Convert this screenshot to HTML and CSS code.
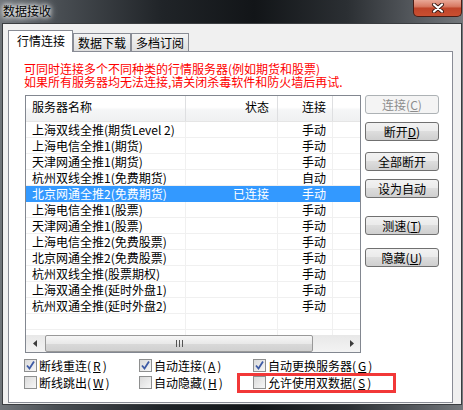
FILE: index.html
```html
<!DOCTYPE html>
<html lang="zh-CN">
<head>
    <meta charset="UTF-8">
    <title>数据接收</title>
    <link rel="stylesheet" href="styles.css">
</head>
<body>
    <div class="window">
        <div class="titlebar">
            <span class="title">数据接收</span>
            <div class="close">
                <svg width="14" height="10" viewBox="0 0 14 10">
                    <path d="M3 1.5 L11 8.5 M11 1.5 L3 8.5" stroke="#3a1a14" stroke-width="4" stroke-linecap="round"/>
                    <path d="M3 1.5 L11 8.5 M11 1.5 L3 8.5" stroke="#fff" stroke-width="2.2" stroke-linecap="round"/>
                </svg>
            </div>
        </div>
        <div class="client">
            <div class="tabs">
                <div class="tab active">行情连接</div>
                <div class="tab">数据下载</div>
                <div class="tab">多档订阅</div>
            </div>
            <div class="panel">
                <div class="notice">
                    <div>可同时连接多个不同种类的行情服务器(例如期货和股票)</div>
                    <div>如果所有服务器均无法连接,请关闭杀毒软件和防火墙后再试.</div>
                </div>
                <div class="main">
                    <div class="listview">
                        <div class="lv-head">
                            <div class="cell c-name">服务器名称</div>
                            <div class="cell c-state">状态</div>
                            <div class="cell c-conn">连接</div>
                            <div class="cell c-extra"></div>
                        </div>
                        <div class="lv-body">
                            <div class="lv-row"><div class="cell c-name">上海双线全推(期货Level 2)</div><div class="cell c-state"></div><div class="cell c-conn">手动</div><div class="cell c-extra"></div></div>
                            <div class="lv-row"><div class="cell c-name">上海电信全推1(期货)</div><div class="cell c-state"></div><div class="cell c-conn">手动</div><div class="cell c-extra"></div></div>
                            <div class="lv-row"><div class="cell c-name">天津网通全推1(期货)</div><div class="cell c-state"></div><div class="cell c-conn">手动</div><div class="cell c-extra"></div></div>
                            <div class="lv-row"><div class="cell c-name">杭州双线全推1(免费期货)</div><div class="cell c-state"></div><div class="cell c-conn">自动</div><div class="cell c-extra"></div></div>
                            <div class="lv-row sel"><div class="cell c-name">北京网通全推2(免费期货)</div><div class="cell c-state">已连接</div><div class="cell c-conn">手动</div><div class="cell c-extra"></div></div>
                            <div class="lv-row"><div class="cell c-name">上海电信全推1(股票)</div><div class="cell c-state"></div><div class="cell c-conn">手动</div><div class="cell c-extra"></div></div>
                            <div class="lv-row"><div class="cell c-name">天津网通全推1(股票)</div><div class="cell c-state"></div><div class="cell c-conn">手动</div><div class="cell c-extra"></div></div>
                            <div class="lv-row"><div class="cell c-name">上海电信全推2(免费股票)</div><div class="cell c-state"></div><div class="cell c-conn">手动</div><div class="cell c-extra"></div></div>
                            <div class="lv-row"><div class="cell c-name">北京网通全推2(免费股票)</div><div class="cell c-state"></div><div class="cell c-conn">手动</div><div class="cell c-extra"></div></div>
                            <div class="lv-row"><div class="cell c-name">杭州双线全推(股票期权)</div><div class="cell c-state"></div><div class="cell c-conn">手动</div><div class="cell c-extra"></div></div>
                            <div class="lv-row"><div class="cell c-name">上海双通全推(延时外盘1)</div><div class="cell c-state"></div><div class="cell c-conn">手动</div><div class="cell c-extra"></div></div>
                            <div class="lv-row"><div class="cell c-name">杭州双通全推(延时外盘2)</div><div class="cell c-state"></div><div class="cell c-conn">手动</div><div class="cell c-extra"></div></div>
                            <div class="lv-row"><div class="cell c-name"></div><div class="cell c-state"></div><div class="cell c-conn"></div><div class="cell c-extra"></div></div>
                            <div class="lv-row"><div class="cell c-name"></div><div class="cell c-state"></div><div class="cell c-conn"></div><div class="cell c-extra"></div></div>
                        </div>
                        <div class="hscroll">
                            <div class="arrow">
                                <svg width="4" height="7" viewBox="0 0 4 7"><path d="M4 0 L0 3.5 L4 7 Z" fill="#3c3c3c"/></svg>
                            </div>
                            <div class="thumb">
                                <svg width="7" height="7" viewBox="0 0 7 7"><path d="M0.5 0 V7 M3.5 0 V7 M6.5 0 V7" stroke="#555" stroke-width="1"/></svg>
                            </div>
                            <div class="track"></div>
                            <div class="arrow">
                                <svg width="4" height="7" viewBox="0 0 4 7"><path d="M0 0 L4 3.5 L0 7 Z" fill="#3c3c3c"/></svg>
                            </div>
                        </div>
                    </div>
                    <div class="buttons">
                        <button class="btn" disabled>连接(<u>C</u>)</button>
                        <button class="btn mt8">断开<u>D</u>)</button>
                        <button class="btn mt11">全部断开</button>
                        <button class="btn mt8">设为自动</button>
                        <button class="btn mt18">测速(<u>T</u>)</button>
                        <button class="btn mt13">隐藏(<u>U</u>)</button>
                    </div>
                </div>
                <div class="options">
                    <label class="opt"><span class="box"><svg width="11" height="11" viewBox="0 0 11 11"><path d="M2 5.5 L4.5 8.5 L9 1.5" fill="none" stroke="#3d5aa5" stroke-width="1.8"/></svg></span>断线重连(<u>R</u>)</label>
                    <label class="opt"><span class="box"><svg width="11" height="11" viewBox="0 0 11 11"><path d="M2 5.5 L4.5 8.5 L9 1.5" fill="none" stroke="#3d5aa5" stroke-width="1.8"/></svg></span>自动连接(<u>A</u>)</label>
                    <label class="opt"><span class="box"><svg width="11" height="11" viewBox="0 0 11 11"><path d="M2 5.5 L4.5 8.5 L9 1.5" fill="none" stroke="#3d5aa5" stroke-width="1.8"/></svg></span>自动更换服务器(<u>G</u>)</label>
                    <label class="opt"><span class="box"></span>断线跳出(<u>W</u>)</label>
                    <label class="opt"><span class="box"></span>自动隐藏(<u>H</u>)</label>
                    <label class="opt"><span class="box"></span>允许使用双数据(<u>S</u>)</label>
                    <div class="mark"></div>
                </div>
            </div>
        </div>
    </div>
</body>
</html>
```

FILE: styles.css
```css
body {
    margin: 0;
    font-family: "Noto Sans CJK SC", "DejaVu Sans", sans-serif;
    font-size: 12px;
    color: #000;
    background: #1e2226;
}
.window {
    width: 463px;
    height: 410px;
    display: flex;
    flex-direction: column;
    background: linear-gradient(90deg, #70757a 0%, #4a4f54 12%, #202428 35%, #121518 55%, #2b2f33 75%, #5c6065 92%, #74787c 100%);
}
.titlebar {
    height: 23px;
    display: flex;
    justify-content: space-between;
    align-items: flex-start;
}
.title {
    margin: 4px 0 0 3px;
    line-height: 14px;
    color: #000;
    text-shadow: 0 0 4px #fff, 0 0 6px #fff, 0 0 8px #dfe3e6;
}
.close {
    width: 49px;
    height: 17px;
    margin-right: 1px;
    box-sizing: border-box;
    border: 1px solid #4a1d15;
    border-top: none;
    border-radius: 0 0 5px 5px;
    background: linear-gradient(#e9a897 0%, #d87a63 40%, #c0452a 52%, #c94f31 100%);
    display: flex;
    align-items: center;
    justify-content: center;
}
.client {
    flex: 1;
    margin: 0 1px 5px 2px;
    border: 1px solid #3a3d40;
    background: #f0f0f0;
    padding: 6px 8px 1px 5px;
    display: flex;
    flex-direction: column;
}
.tabs {
    height: 21px;
    display: flex;
    align-items: flex-end;
}
.tab {
    height: 18px;
    box-sizing: border-box;
    padding: 0 4px;
    line-height: 17px;
    border: 1px solid #898c95;
    border-bottom: none;
    background: linear-gradient(#f4f4f4, #dedede);
    white-space: nowrap;
}
.tab.active {
    height: 22px;
    margin-bottom: -1px;
    padding: 0 7px 0 8px;
    line-height: 19px;
    background: #fff;
    position: relative;
    z-index: 1;
}
.panel {
    flex: 1;
    border: 1px solid #898c95;
    background: #fff;
    padding: 10px 0 0 16px;
}
.notice {
    color: #ff0000;
    line-height: 13px;
    margin-left: -1px;
    white-space: nowrap;
}
.main {
    display: flex;
    gap: 4px;
    margin-top: 7px;
}
.listview {
    width: 336px;
    height: 258px;
    box-sizing: border-box;
    border: 1px solid #828790;
    display: flex;
    flex-direction: column;
}
.lv-head {
    display: flex;
    height: 26px;
    box-sizing: border-box;
    border-bottom: 1px solid #e5e5e5;
    line-height: 21px;
    background: linear-gradient(#ffffff 0%, #ffffff 45%, #f5f6f7 55%, #eff0f1 100%);
}
.lv-head .cell {
    border-right-color: #dedfe1;
}
.lv-body {
    height: 213px;
    overflow: hidden;
}
.lv-row {
    display: flex;
    height: 16px;
    box-sizing: border-box;
    border-bottom: 1px solid #f0f0f0;
    line-height: 15px;
}
.cell {
    box-sizing: border-box;
    border-right: 1px solid #f0f0f0;
    white-space: nowrap;
    overflow: hidden;
}
.c-name {
    width: 160px;
    padding-left: 6px;
}
.c-state {
    width: 92px;
    text-align: right;
    padding-right: 8px;
}
.c-conn {
    width: 55px;
    text-align: right;
    padding-right: 6px;
}
.c-extra {
    width: 27px;
    border-right: none;
}
.lv-row.sel {
    background: #3399ff;
    color: #fff;
    border-bottom-color: #3399ff;
}
.lv-row.sel .cell {
    border-right-color: #3399ff;
}
.hscroll {
    height: 17px;
    display: flex;
    background: linear-gradient(#e8e8e8, #f3f3f3);
}
.arrow {
    width: 17px;
    display: flex;
    align-items: center;
    justify-content: center;
}
.thumb {
    width: 268px;
    margin-left: 2px;
    box-sizing: border-box;
    border: 1px solid #999;
    border-radius: 2px;
    background: linear-gradient(#f6f6f6 0%, #e9e9e9 50%, #d9d9d9 51%, #d0d0d0 100%);
    display: flex;
    align-items: center;
    justify-content: center;
}
.track {
    flex: 1;
}
.buttons {
    width: 74px;
    display: flex;
    flex-direction: column;
}
.btn {
    height: 19px;
    box-sizing: border-box;
    padding: 0;
    border: 1px solid #707070;
    border-radius: 3px;
    background: linear-gradient(#f2f2f2 0%, #ebebeb 45%, #dddddd 50%, #cfcfcf 100%);
    font-family: inherit;
    font-size: 12px;
    line-height: 17px;
    color: #000;
    text-align: center;
}
.btn:disabled {
    border-color: #adb2b5;
    background: #f4f4f4;
    color: #8c8c8c;
}
.mt8 { margin-top: 8px; }
.mt11 { margin-top: 11px; }
.mt13 { margin-top: 13px; }
.mt18 { margin-top: 18px; }
.options {
    position: relative;
    display: grid;
    grid-template-columns: 115px 114px 1fr;
    grid-auto-rows: 17px;
    margin: 4px 0 0 -1px;
}
.opt {
    display: flex;
    align-items: center;
    gap: 2px;
    white-space: nowrap;
}
.box {
    width: 13px;
    height: 13px;
    box-sizing: border-box;
    border: 1px solid #8e8f8f;
    background: linear-gradient(135deg, #dadada, #f7f7f7);
    display: flex;
    align-items: center;
    justify-content: center;
}
.mark {
    position: absolute;
    left: 213px;
    top: 16px;
    width: 159px;
    height: 20px;
    box-sizing: border-box;
    border: 3px solid #f23838;
}
```
